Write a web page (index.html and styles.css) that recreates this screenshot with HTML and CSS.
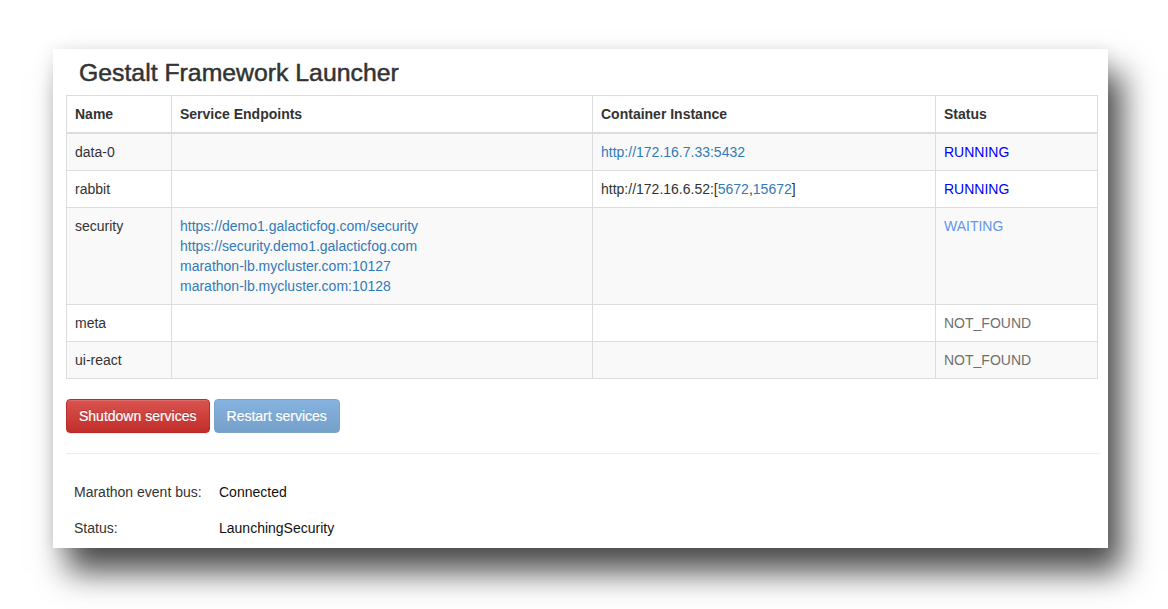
FILE: index.html
```html
<!DOCTYPE html>
<html>
<head>
<meta charset="utf-8">
<title>Gestalt Framework Launcher</title>
<link rel="stylesheet" href="styles.css">
</head>
<body>
<div class="window">
  <div class="container">
    <h3 class="title">Gestalt Framework Launcher</h3>
    <table class="services">
      <thead>
        <tr>
          <th class="col-name">Name</th>
          <th class="col-endpoints">Service Endpoints</th>
          <th class="col-container">Container Instance</th>
          <th class="col-status">Status</th>
        </tr>
      </thead>
      <tbody>
        <tr class="striped">
          <td>data-0</td>
          <td></td>
          <td><a href="#">http://172.16.7.33:5432</a></td>
          <td class="st-running">RUNNING</td>
        </tr>
        <tr>
          <td>rabbit</td>
          <td></td>
          <td>http://172.16.6.52:[<a href="#">5672</a>,<a href="#">15672</a>]</td>
          <td class="st-running">RUNNING</td>
        </tr>
        <tr class="striped">
          <td>security</td>
          <td class="endpoints">
            <a href="#">https://demo1.galacticfog.com/security</a>
            <a href="#">https://security.demo1.galacticfog.com</a>
            <a href="#">marathon-lb.mycluster.com:10127</a>
            <a href="#">marathon-lb.mycluster.com:10128</a>
          </td>
          <td></td>
          <td class="st-waiting">WAITING</td>
        </tr>
        <tr>
          <td>meta</td>
          <td></td>
          <td></td>
          <td class="st-notfound">NOT_FOUND</td>
        </tr>
        <tr class="striped">
          <td>ui-react</td>
          <td></td>
          <td></td>
          <td class="st-notfound">NOT_FOUND</td>
        </tr>
      </tbody>
    </table>
    <div class="actions">
      <button class="btn btn-danger">Shutdown services</button>
      <button class="btn btn-primary" disabled>Restart services</button>
    </div>
    <hr class="divider">
    <div class="info">
      <div class="info-label">Marathon event bus:</div>
      <div class="info-value">Connected</div>
      <div class="info-label">Status:</div>
      <div class="info-value">LaunchingSecurity</div>
    </div>
  </div>
</div>
</body>
</html>
```

FILE: styles.css
```css
html, body {
  margin: 0;
  padding: 0;
  background: #ffffff;
}

body {
  font-family: "Liberation Sans", Arial, sans-serif;
  font-size: 14px;
  line-height: 20px;
  color: #333333;
  padding: 49px 0 61px 53px;
}

.window {
  width: 1055px;
  height: 499px;
  background: #ffffff;
  overflow: hidden;
  box-shadow: 14px 24px 30px rgba(0, 0, 0, 0.7), 0 0 14px rgba(0, 0, 0, 0.08);
}

.container {
  padding: 0 8px 0 13px;
}

.title {
  margin: 11px 0 9px 0;
  padding-left: 13px;
  font-size: 24.8px;
  line-height: 26.4px;
  font-weight: 400;
  color: #333333;
  -webkit-text-stroke: 0.5px #333333;
}

.services {
  width: 1032px;
  border-collapse: collapse;
  border-spacing: 0;
  margin-bottom: 20px;
  border: 1px solid #dddddd;
}

.services th,
.services td {
  padding: 8px;
  line-height: 20px;
  text-align: left;
  vertical-align: top;
  border: 1px solid #dddddd;
}

.services th {
  font-weight: bold;
  color: #333333;
  border-bottom: 2px solid #dddddd;
}

.col-name { width: 88px; }
.col-endpoints { width: 404px; }
.col-container { width: 326px; }

.services tr.striped td {
  background: #f9f9f9;
}

.services a {
  color: #337ab7;
  text-decoration: none;
}

.endpoints a {
  display: block;
}

.st-running { color: #0000ff; }
.st-waiting { color: #6495ed; }
.st-notfound { color: #6f6f6f; }

.actions {
  display: flex;
  gap: 4px;
}

.btn {
  font-family: "Liberation Sans", Arial, sans-serif;
  font-size: 14px;
  line-height: 20px;
  padding: 6px 12px;
  border: 1px solid transparent;
  border-radius: 4px;
  color: #ffffff;
  text-shadow: 0 -1px 0 rgba(0, 0, 0, 0.2);
  box-shadow: inset 0 1px 0 rgba(255, 255, 255, 0.15), 0 1px 1px rgba(0, 0, 0, 0.075);
  cursor: pointer;
  -webkit-text-stroke: 0.2px #ffffff;
}

.btn-danger {
  background-image: linear-gradient(to bottom, #d9534f 0, #c12e2a 100%);
  border-color: #b92c28;
}

.btn-primary {
  background-image: linear-gradient(to bottom, #86b3df 0, #74a0ca 100%);
  border-color: #7aa4cd;
}

.btn[disabled] {
  box-shadow: none;
  text-shadow: 0 -1px 0 rgba(0, 0, 0, 0.08);
  cursor: not-allowed;
}

.divider {
  margin: 20px 0;
  border: 0;
  border-top: 1px solid #eeeeee;
  height: 0;
}

.info {
  display: grid;
  grid-template-columns: 145px auto;
}

.info-label,
.info-value {
  padding: 8px;
  line-height: 20px;
}

.info-label {
  color: #333333;
}

.info-value {
  color: #111111;
}
```
